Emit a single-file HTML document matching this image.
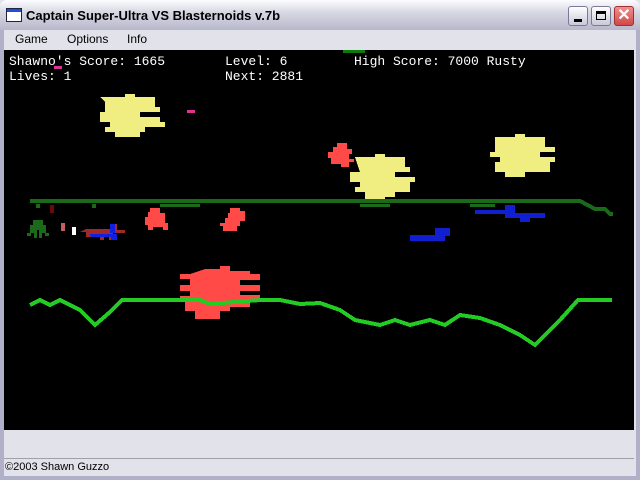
<!DOCTYPE html><html><head><style>
*{margin:0;padding:0}
body{width:640px;height:480px;overflow:hidden;background:#e2e2ea;font-family:"Liberation Sans",sans-serif;position:relative}
.title{position:absolute;left:0;top:0;width:640px;height:30px;background:linear-gradient(#fdfdff,#d8d8e4 40%,#b8b8cc);border-radius:7px 7px 0 0}
.title span{position:absolute;left:26px;top:8px;font-size:13px;font-weight:bold;color:#000}
.btn{position:absolute;top:6px;width:20px;height:20px;border-radius:3px;background:linear-gradient(#fff,#c8c8d8);border:1px solid #7a7a96;box-sizing:border-box}
.menu{position:absolute;top:32px;font-size:12px}
.game{position:absolute;left:4px;top:50px;width:630px;height:380px;background:#000}
.t{position:absolute;color:#fff;font-family:"Liberation Mono",monospace;font-size:13px}
.frame{position:absolute;left:0;top:30px;width:4px;height:450px;background:#b0b0c8}
</style></head><body>
<div class="title"><svg style="position:absolute;left:6px;top:8px" width="16" height="14"><rect x="0.5" y="0.5" width="15" height="13" fill="#fff" stroke="#224"/><rect x="1" y="1" width="14" height="3" fill="#2050d0"/></svg><span>Captain Super-Ultra VS Blasternoids v.7b</span>
<div class="btn" style="left:568px"><div style="position:absolute;left:5px;top:12px;width:8px;height:3px;background:#000"></div></div>
<div class="btn" style="left:591px"><div style="position:absolute;left:4px;top:4px;width:10px;height:9px;border:1px solid #000;border-top-width:3px;box-sizing:border-box"></div></div>
<div class="btn" style="left:614px;background:linear-gradient(#f09090,#d04848);border-color:#a03030;color:#fff;font-weight:bold;font-size:16px;line-height:18px;text-align:center">✕</div></div>
<div class="frame"></div><div class="frame" style="left:636px"></div>
<div class="menu" style="left:15px">Game</div><div class="menu" style="left:67px">Options</div><div class="menu" style="left:127px">Info</div>
<div class="game">
<svg width="630" height="380" style="position:absolute;left:0;top:0" shape-rendering="crispEdges">
<g transform="translate(-4,-50)">
<rect x="343" y="50" width="22" height="3" fill="#0a7a0a"/>
<rect x="54" y="66" width="8" height="3" fill="#e0309a"/><rect x="187" y="110" width="8" height="3" fill="#e0309a"/>
<g fill="#f0ee80">
<path d="M100 97h25v-3h10v3h20v10h5v5h-20v5h20v5h5v5h-20v5h-5v5h-25v-5h-10v-5h5v-5h-10v-10h5v-10z"/>
<path d="M355 157h20v-3h10v3h20v10h5v5h-15v5h20v5h-5v10h-15v5h-10v5h-20v-10h-10v-5h5v-5h-10v-10h10z"/>
<path d="M495 137h20v-3h10v3h20v10h10v5h-15v5h15v5h-5v10h-25v5h-20v-5h-10v-10h5v-5h-10v-5h5z"/>
</g>
<g fill="#ff4a48">
<path d="M205 269h15v-3h10v5h20v3h10v6h-20v5h20v6h-20v4h20v6h-10v6h-20v4h-10v8h-25v-8h-10v-10h-5v-5h10v-5h-10v-6h10v-6h-10v-5h10z"/>
<path d="M150 208h10v5h5v10h3v7h-5v-3h-10v3h-5v-5h-3v-8h3v-5h2z"/>
<path d="M230 208h10v3h5v10h-5v5h-3v5h-14v-5h-3v-3h5v-5h3v-5h2z"/>
<path d="M337 143h10v6h5v5h-3v5h5v3h-5v5h-8v-3h-10v-6h-3v-6h5v-5h4z"/>
</g>
<path d="M30 201h550l15 8h10l5 5h3" stroke="#1a6a1a" stroke-width="4" fill="none"/>
<g fill="#1a6a1a"><rect x="36" y="204" width="4" height="4"/><rect x="92" y="204" width="4" height="4"/><rect x="160" y="204" width="40" height="3"/><rect x="360" y="204" width="30" height="3"/><rect x="470" y="204" width="25" height="3"/></g>
<rect x="50" y="205" width="4" height="8" fill="#6a0a0a"/>
<path d="M33 220h10v5h3v8h3v3h-4v-3h-3v5h-3v-8h-2v8h-3v-5h-3v3h-4v-3h3v-8h3z" fill="#1a6a1a"/>
<rect x="61" y="223" width="4" height="8" fill="#c06060"/><rect x="72" y="227" width="4" height="8" fill="#fff"/>
<path d="M86 229h25v-5h6v6h8v3h-12v7h-4v-4h-5v4h-4v-3h-14v-5h-6z" fill="#a02828"/>
<path d="M90 234h27v6h-6v-3h-20z M110 224h5v9h-5z" fill="#1020e0"/>
<g fill="#1020d0"><path d="M475 210h30v-5h10v8h30v5h-15v4h-10v-4h-15v-4h-30z"/><path d="M410 235h25v-7h15v8h-5v5h-35z"/></g>
<polyline points="30,305 40,300 50,305 60,300 70,305 80,310 95,325 110,312 122,300 200,300 210,304 260,300 280,300 300,304 320,303 340,310 355,320 380,325 395,320 410,325 430,320 445,325 460,315 480,318 500,325 520,335 535,345 560,320 578,300 612,300" stroke="#22cc22" stroke-width="4" fill="none"/>
</g></svg>
<div class="t" style="left:5px;top:4px">Shawno's Score: 1665</div>
<div class="t" style="left:5px;top:19px">Lives: 1</div>
<div class="t" style="left:221px;top:4px">Level: 6</div>
<div class="t" style="left:221px;top:19px">Next: 2881</div>
<div class="t" style="left:350px;top:4px">High Score: 7000 Rusty</div>
</div>
<div style="position:absolute;left:4px;top:458px;width:630px;height:1px;background:#a0a0a8"></div>
<div style="position:absolute;left:5px;top:461px;font-size:11px">©2003 Shawn Guzzo</div>
<div style="position:absolute;left:0;top:476px;width:640px;height:4px;background:#b0b0c8"></div>
</body></html>
